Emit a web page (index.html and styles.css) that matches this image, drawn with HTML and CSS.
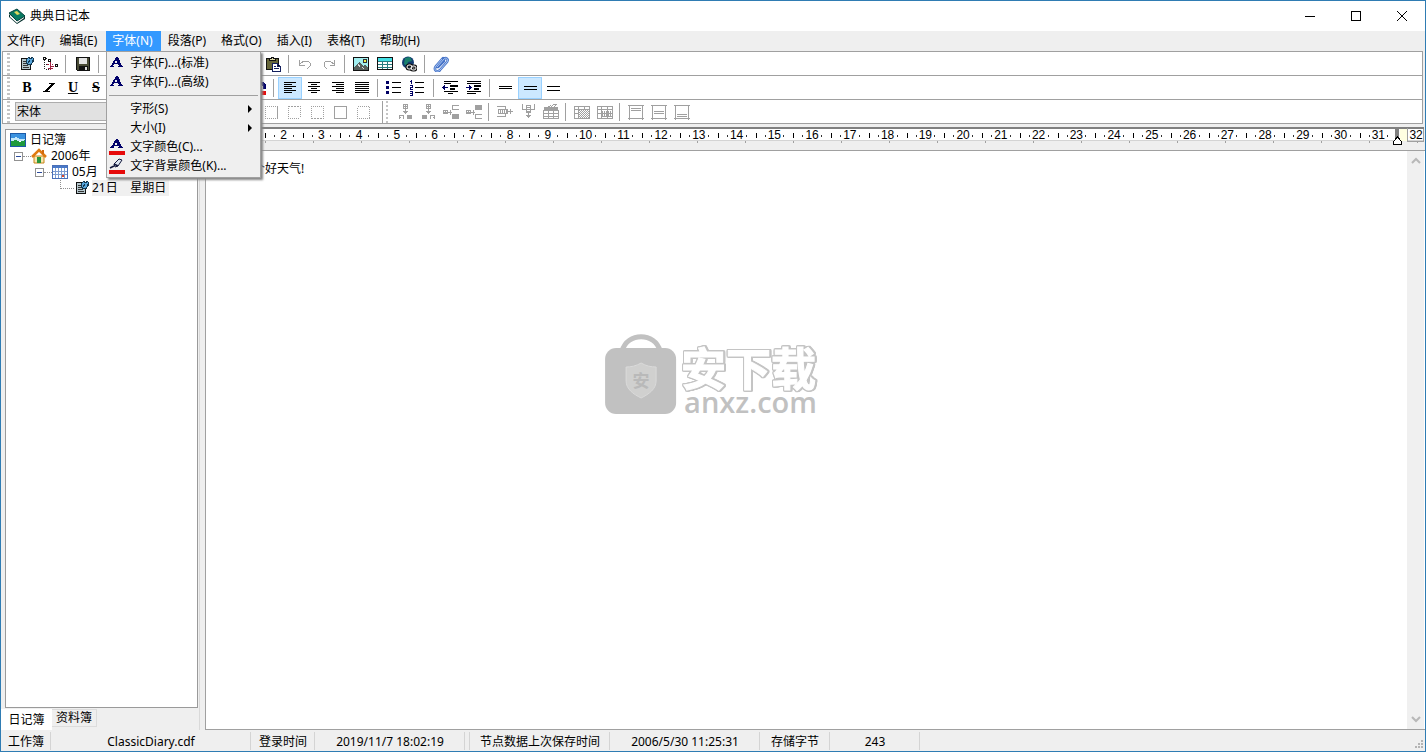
FILE: index.html
```html
<!DOCTYPE html>
<html lang="zh-CN">
<head>
<meta charset="utf-8">
<title>典典日记本</title>
<link rel="stylesheet" href="styles.css">
</head>
<body>
<svg class="defs" aria-hidden="true">
  <symbol id="letter-a" viewBox="0 0 16 16"><path fill="#00006a" d="M7 2h2l4 9h1v1H9v-1h1L9 9H5l-1 2h1v1H1v-1h1zM7 5L5.500 8h3z"/></symbol>
  <symbol id="diary" viewBox="0 0 16 16"><path fill="#b4c6cc" stroke="#111" d="M2.500 2.500h9v11h-9z"/><path stroke="#333" d="M4 5.500h3M4 7.500h3M4 9.500h5M4 11.500h6"/><path fill="#58a6dc" stroke="#143850" d="M7.500 6.500v-3l2-2 2 1 2-1 1 1v3l-2 2v1h-4z"/><path stroke="#143850" d="M11 4L8 9M13 4v2"/></symbol>
  <symbol id="expander" viewBox="0 0 9 9"><path fill="#fff" stroke="#919191" d="M.5.5h8v8h-8z"/><path stroke="#2b4a9b" d="M2 4.500h5"/></symbol>
</svg>

<div class="window">
  <header class="titlebar">
    <svg class="app-icon" viewBox="0 0 18 18"><path fill="#042f2b" d="M1 7l8 8 8-6v3l-8 5-8-7z"/><path fill="#fff" d="M2 8l7 6 7-5v2l-7 5-7-6z"/><path fill="#087a62" stroke="#04423c" d="M1 6l8-4 8 7-8 5z"/><path fill="#dfd85c" d="M6 5l3-1 3 3-3 1z"/></svg>
    <h1 class="title">典典日记本</h1>
    <button class="win-btn" aria-label="最小化"><svg viewBox="0 0 12 12"><path d="M1 6.500h10"/></svg></button>
    <button class="win-btn" aria-label="最大化"><svg viewBox="0 0 12 12"><path d="M1.500 1.500h9v9h-9z"/></svg></button>
    <button class="win-btn smooth" aria-label="关闭"><svg viewBox="0 0 12 12"><path d="M1 1l10 10M11 1L1 11"/></svg></button>
  </header>

  <nav class="menubar">
    <button class="menu">文件(F)</button>
    <button class="menu">编辑(E)</button>
    <div class="menu-holder">
      <button class="menu open" aria-expanded="true">字体(N)</button>
      <div class="popup" role="menu">
        <button class="item" role="menuitem"><svg class="ic"><use href="#letter-a"/></svg><span>字体(F)...(标准)</span></button>
        <button class="item" role="menuitem"><svg class="ic"><use href="#letter-a"/></svg><span>字体(F)...(高级)</span></button>
        <hr class="popup-line">
        <button class="item" role="menuitem"><span class="ic"></span><span>字形(S)</span><i class="arrow"></i></button>
        <button class="item" role="menuitem"><span class="ic"></span><span>大小(I)</span><i class="arrow"></i></button>
        <button class="item" role="menuitem"><svg class="ic" viewBox="0 0 16 16"><path fill="#00006a" d="M7 0h2l4 8h1v1H9V8h1L9 7H5L4 8h1v1H1V8h1zM7 3L5.500 6h3z"/><path fill="#e60a0a" d="M0 12h16v4H0z"/></svg><span>文字颜色(C)...</span></button>
        <button class="item" role="menuitem"><svg class="ic smooth" viewBox="0 0 16 16"><path fill="#dce4ee" stroke="#12183c" d="M5 6l5-5 3 1-4 6-3 1z"/><path stroke="#12183c" stroke-width="1.500" d="M5 6l4 2M1 10l4-2"/><path fill="#e60a0a" d="M0 12h16v4H0z"/></svg><span>文字背景颜色(K)...</span></button>
      </div>
    </div>
    <button class="menu">段落(P)</button>
    <button class="menu">格式(O)</button>
    <button class="menu">插入(I)</button>
    <button class="menu">表格(T)</button>
    <button class="menu">帮助(H)</button>
  </nav>

  <div class="toolbars">
    <div class="toolbar">
      <div class="lead">
        <i class="grip"></i>
        <button class="tool" aria-label="日记"><svg class="ic"><use href="#diary"/></svg></button>
        <button class="tool" aria-label="节点"><svg class="ic" viewBox="0 0 16 16"><path stroke="#222" d="M2.500 4v10M4 2.500h2M4 8.500h2M4 13.500h3" stroke-dasharray="1 1"/><path fill="#fff" stroke="#111" d="M1.500 1.500h2v2h-2zM6.500 3.500h2v2h-2zM13.500 8.500h2v2h-2z"/><path stroke="#a02040" d="M5 8.500h2M8 6v8M9 10.500h3M6 12.500h5M10 8v1"/></svg></button>
        <i class="sep"></i>
        <button class="tool" aria-label="保存"><svg class="ic" viewBox="0 0 16 16"><path fill="#4a4c36" stroke="#111" d="M1.500 1.500h13v13h-12l-1-1z"/><path fill="#e4e4e4" d="M4 2h8v6H4z"/><path fill="#111" d="M4 10h9v4H4z"/><path fill="#ddd" d="M10 11h2v3h-2z"/></svg></button>
        <i class="sep"></i>
      </div>
      <button class="tool" aria-label="粘贴"><svg class="ic" viewBox="0 0 16 16"><path fill="#66663a" stroke="#111" d="M1.500 2.500h12v11h-12z"/><path fill="#ddd8a8" stroke="#111" d="M4.500 4.500v-2h2v-1h2v1h2v2z"/><path fill="#fff" stroke="#14205e" d="M7.500 7.500h5l3 3v4.500h-8z"/><path stroke="#14205e" d="M9 10.500h2M9 12.500h5M12.500 8v2.500h3"/></svg></button>
      <i class="sep"></i>
      <button class="tool" aria-label="撤消"><svg class="ic line-grey" viewBox="0 0 16 16"><path d="M2.500 4v5h5M3 8l4-3h4l2 2v3l-3 3"/></svg></button>
      <button class="tool" aria-label="重做"><svg class="ic line-grey" viewBox="0 0 16 16"><path d="M13.500 4v5h-5M13 8L9 5H5L3 7v3l3 3"/></svg></button>
      <i class="sep"></i>
      <button class="tool" aria-label="图片"><svg class="ic" viewBox="0 0 16 16"><path fill="#a2eff0" stroke="#111" d="M.5 1.500h15v13H.5z"/><path fill="#56605c" d="M1 14v-3l5-5 4 4 2-1 3 3v2z"/><path fill="#f1f04a" stroke="#333" d="M10.500 3.500h3v3h-3z"/><path stroke="#ddd" d="M5 8l2 3M9 11l2 2"/></svg></button>
      <button class="tool" aria-label="表格"><svg class="ic" viewBox="0 0 16 16"><path fill="#fff" stroke="#111" d="M.5 1.500h15v12H.5z"/><path fill="#42dfe4" d="M1 2h14v3H1z"/><path stroke="#287c80" d="M1 5.500h14M1 8.500h14M1 11.500h14M5.500 5v8M10.500 5v8"/></svg></button>
      <button class="tool" aria-label="超链接"><svg class="ic smooth" viewBox="0 0 16 16"><circle cx="7" cy="6.500" r="6" fill="#133c72"/><path fill="#18806c" d="M4 2l5-1 2 4-4 1-1 4-3-2z"/><g fill="none" stroke="#111" stroke-width="3"><rect x="6" y="9" width="5" height="4" rx="2"/><rect x="10" y="10" width="5" height="4" rx="2"/></g><g fill="none" stroke="#fff"><rect x="6" y="9" width="5" height="4" rx="2"/><rect x="10" y="10" width="5" height="4" rx="2"/></g></svg></button>
      <i class="sep"></i>
      <button class="tool" aria-label="附件"><svg class="ic smooth" viewBox="0 0 16 16"><path fill="none" stroke="#4774c8" stroke-width="2.500" stroke-linecap="round" d="M4 11l7-8c2-2 5 0 3 3l-7 8c-3 3-7 0-4-4l7-8M5 11l6-6"/><path fill="none" stroke="#a8c4f2" d="M4 11l7-8c2-2 5 0 3 3l-7 8c-3 3-7 0-4-4l6-7"/></svg></button>
    </div>

    <div class="toolbar second">
      <div class="lead">
        <i class="grip"></i>
        <button class="tool letter">B</button>
        <button class="tool" aria-label="斜体"><svg class="ic" viewBox="0 0 16 16"><path fill="#000" d="M7 3h6v1h-1l-6 7h2v1H1v-1h2l6-7H7z"/></svg></button>
        <button class="tool letter under">U</button>
        <button class="tool letter strike">S</button>
      </div>
      <button class="tool" aria-label="颜色"><svg class="ic" viewBox="0 0 16 16"><path fill="#00006a" d="M8 2h5l3 3v4h-3V6z"/><path fill="#e60a0a" d="M0 11h16v4H0z"/></svg></button>
      <i class="sep"></i>
      <button class="tool on" aria-label="左对齐"><svg class="ic line-black" viewBox="0 0 16 16"><path d="M2 2.500h12M2 4.500h8M2 6.500h12M2 8.500h8M2 10.500h12M2 12.500h8"/></svg></button>
      <button class="tool" aria-label="居中"><svg class="ic line-black" viewBox="0 0 16 16"><path d="M2 2.500h12M5 4.500h6M2 6.500h12M5 8.500h6M2 10.500h12M5 12.500h6"/></svg></button>
      <button class="tool" aria-label="右对齐"><svg class="ic line-black" viewBox="0 0 16 16"><path d="M2 2.500h12M6 4.500h8M2 6.500h12M6 8.500h8M2 10.500h12M6 12.500h8"/></svg></button>
      <button class="tool" aria-label="两端对齐"><svg class="ic line-black" viewBox="0 0 16 16"><path d="M1 2.500h14M1 4.500h14M1 6.500h14M1 8.500h14M1 10.500h14M1 12.500h14"/></svg></button>
      <i class="sep"></i>
      <button class="tool" aria-label="项目符号"><svg class="ic line-black" viewBox="0 0 16 16"><path fill="#000064" stroke="none" d="M0 1h3v3H0zM0 6h3v3H0zM0 11h3v3H0z"/><path d="M6 2.500h9M6 7.500h9M6 12.500h9"/></svg></button>
      <button class="tool" aria-label="编号"><svg class="ic line-black" viewBox="0 0 16 16"><path stroke="#000064" d="M1.500 0v4M0 1.500h1M0 5.500h2.500v2h-2v2H3M0 11.500h2.500v4H0M0 13.500h2"/><path d="M5 2.500h9M5 7.500h9M5 12.500h9"/></svg></button>
      <i class="sep"></i>
      <button class="tool" aria-label="减少缩进"><svg class="ic line-black" viewBox="0 0 16 16"><path d="M2 1.500h14M2 3.500h7M2 11.500h14M6 13.500h5"/><path stroke-width="2" d="M8 6h8M8 9h5"/><path stroke="#000064" d="M0 7.500h6M1.500 6v3M2.500 5v5"/></svg></button>
      <button class="tool" aria-label="增加缩进"><svg class="ic line-black" viewBox="0 0 16 16"><path d="M1 1.500h14M1 3.500h14M1 11.500h14M1 13.500h9"/><path stroke-width="2" d="M8 6h7M8 9h5"/><path stroke="#000064" d="M0 7.500h6M4.500 6v3M3.500 5v5"/></svg></button>
      <i class="sep"></i>
      <button class="tool" aria-label="单倍行距"><svg class="ic line-black" viewBox="0 0 16 16"><path d="M1 6.500h13M1 8.500h13"/></svg></button>
      <button class="tool on" aria-label="1.5 倍行距"><svg class="ic line-black" viewBox="0 0 16 16"><path d="M2 6.500h13M2 9.500h13"/></svg></button>
      <button class="tool" aria-label="双倍行距"><svg class="ic line-black" viewBox="0 0 16 16"><path d="M1 6.500h13M1 10.500h13"/></svg></button>
    </div>

    <div class="toolbar third">
      <div class="lead">
        <i class="grip"></i>
        <select class="font-pick" aria-label="字体"><option>宋体</option></select>
      </div>
      <button class="tool" aria-label="右框线"><svg class="ic line-grey" viewBox="0 0 16 16"><path stroke-dasharray="1 1" d="M2 2.500h12M2.500 2v12M2 14.500h12"/><path d="M14.500 2v13"/></svg></button>
      <button class="tool" aria-label="上框线"><svg class="ic line-grey" viewBox="0 0 16 16"><path stroke-dasharray="1 1" d="M2.500 2v12M2 14.500h12M14.500 2v12"/><path stroke-dasharray="2 1" d="M2 2.500h13"/></svg></button>
      <button class="tool" aria-label="无框线"><svg class="ic line-grey" viewBox="0 0 16 16"><path stroke-dasharray="1 1" d="M2 2.500h12M2.500 2v12M14.500 2v12"/><path stroke-dasharray="2 1" d="M2 14.500h13"/></svg></button>
      <button class="tool" aria-label="全部框线"><svg class="ic line-grey" viewBox="0 0 16 16"><path d="M2.500 2.500h12v12h-12z"/></svg></button>
      <button class="tool" aria-label="内框线"><svg class="ic line-grey" viewBox="0 0 16 16"><path stroke-dasharray="1 1" d="M2.500 2.500h12v12h-12z"/></svg></button>
      <i class="edge"></i>
      <button class="tool" aria-label="拆分行"><svg class="ic line-grey" viewBox="0 0 16 16"><path d="M6.500.5h4v4h-4zM6 2.500h5M8.500 0v10M6 7.500h5M7 8.500h3"/><path d="M2.500 15v-3.500h4V15M2 13.500h2"/><path fill="#a0a0a0" d="M10 11h5v4h-5z"/></svg></button>
      <button class="tool" aria-label="拆分列"><svg class="ic line-grey" viewBox="0 0 16 16"><path d="M6.500.5h4v4h-4zM6 2.500h5M8.500 0v10M6 7.500h5M7 8.500h3"/><path d="M10.500 15v-3.500h4V15M13 13.500h2"/><path fill="#a0a0a0" d="M2 11h5v4H2z"/></svg></button>
      <button class="tool" aria-label="下方插入"><svg class="ic line-grey" viewBox="0 0 16 16"><path d="M.5 6.500h4v3h-4zM2.500 6v4M0 8.500h9M7.500 6v5M16 1.500H9.500v4H16"/><path fill="#a0a0a0" d="M9 10h7v5H9z"/></svg></button>
      <button class="tool" aria-label="上方插入"><svg class="ic line-grey" viewBox="0 0 16 16"><path d="M.5 6.500h4v3h-4zM2.500 6v4M0 8.500h9M7.500 6v5M16 10.500H9.500v4H16"/><path fill="#a0a0a0" d="M9 1h7v5H9z"/></svg></button>
      <i class="sep"></i>
      <button class="tool" aria-label="删除行"><svg class="ic line-grey" viewBox="0 0 16 16"><path d="M0 2.500h8.500v3M0 12.500h8.500v-3M1 5.500h9v4H1zM10 7.500h6M13.500 5v5"/><path stroke-dasharray="1 1" stroke-width="3" d="M1 7.500h9"/></svg></button>
      <button class="tool" aria-label="删除列"><svg class="ic line-grey" viewBox="0 0 16 16"><path d="M2.500 0v5h4M14.500 0v5h-4M6.500 1.500h4v7h-4zM8.500 9v5M6 11.500h5M7 12.500h3"/><path stroke-width="3" stroke-dasharray="1 1" d="M8.500 1v7"/></svg></button>
      <button class="tool" aria-label="删除表格"><svg class="ic line-grey" viewBox="0 0 16 16"><path d="M.5 6.500h15v8H.5zM0 9.500h16M0 12.500h16M5.500 6v8M10.500 6v8M4 3.500l4-2M8 3l3-3h3l-3 3"/><path fill="#a0a0a0" d="M1 3h14v3H1z"/></svg></button>
      <i class="sep"></i>
      <button class="tool" aria-label="选择单元格"><svg class="ic line-grey" viewBox="0 0 16 16"><path d="M.5 2.500h15v12H.5zM.5 5.500h15M4.500 2v12M0 9.500h5M10.500 2v3"/><path d="M5 6.500h10M5 8.500h10M5 10.500h10M5 12.500h10" stroke-dasharray="1 1"/><path d="M5 7.500h10M5 9.500h10M5 11.500h10M5 13.500h10" stroke-dasharray="1 1" stroke-dashoffset="1"/></svg></button>
      <button class="tool" aria-label="选择表格"><svg class="ic line-grey" viewBox="0 0 16 16"><path d="M.5 2.500h15v12H.5zM.5 5.500h15M4.500 2v12M0 9.500h16M10.500 2v12M5 12.500h10"/><path stroke-width="5" stroke-dasharray="1 1" d="M5 9.500h10"/></svg></button>
      <i class="sep"></i>
      <button class="tool" aria-label="顶端对齐"><svg class="ic line-grey" viewBox="0 0 16 16"><path d="M0 1.500h16M0 14.500h16M1.500 1v15M14.500 1v15M3 4.500h10M3 6.500h10"/></svg></button>
      <button class="tool" aria-label="垂直居中"><svg class="ic line-grey" viewBox="0 0 16 16"><path d="M0 1.500h16M0 14.500h16M1.500 1v15M14.500 1v15M3 7.500h10M3 9.500h10"/></svg></button>
      <button class="tool" aria-label="底端对齐"><svg class="ic line-grey" viewBox="0 0 16 16"><path d="M0 1.500h16M0 14.500h16M1.500 1v15M14.500 1v15M3 10.500h10M3 12.500h10"/></svg></button>
    </div>
  </div>

  <main class="workspace">
    <aside class="sidebar">
      <ul class="tree">
        <li class="node"><svg class="ic" viewBox="0 0 16 16"><path fill="#fff" stroke="#1b5aa8" d="M.5 1.500h15v13H.5z"/><path fill="#3a92e0" d="M1 2h14v5H1z"/><path fill="#c4e8fa" d="M1 6h3l2-1 4 2h5v2H1z"/><path fill="#1f9a3c" d="M1 9l5-1 4 2 5-2v6H1z"/></svg><span class="label">日记簿</span></li>
        <li class="node level1"><svg class="expander"><use href="#expander"/></svg><i class="dots"></i><svg class="ic smooth" viewBox="0 0 16 16"><path fill="#f8e7b0" stroke="#c88418" d="M3 8h10v7H3z"/><path fill="#28963c" d="M6 9h4v6H6z"/><path fill="none" stroke="#e07a10" stroke-width="2.500" d="M1 9l7-7 7 7"/><path fill="#d06a10" d="M11 2h2v4h-2z"/></svg><span class="label">2006年</span></li>
        <li class="node level2"><svg class="expander"><use href="#expander"/></svg><i class="dots"></i><svg class="ic" viewBox="0 0 16 16"><path fill="#fff" stroke="#4a70b8" d="M.5 1.500h15v13H.5z"/><path fill="#4878c8" d="M1 2h14v2H1z"/><path stroke="#7c9cd0" d="M1 7.500h14M1 10.500h14M3.500 4v10M6.500 4v10M9.500 4v10M12.500 4v10"/><path fill="#e04828" d="M10 11h2v2h-2z"/></svg><span class="label">05月</span></li>
        <li class="node level3"><i class="elbow"></i><svg class="ic"><use href="#diary"/></svg><span class="label picked">21日&nbsp;&nbsp; &nbsp;星期日</span></li>
      </ul>
      <div class="tabs" role="tablist">
        <button class="tab current" role="tab" aria-selected="true">日记簿</button>
        <button class="tab" role="tab" aria-selected="false">资料簿</button>
      </div>
    </aside>

    <section class="document">
      <div class="ruler">
        <div class="scale">
          <span>1</span><span>2</span><span>3</span><span>4</span><span>5</span><span>6</span><span>7</span><span>8</span><span>9</span><span>10</span><span>11</span><span>12</span><span>13</span><span>14</span><span>15</span><span>16</span><span>17</span><span>18</span><span>19</span><span>20</span><span>21</span><span>22</span><span>23</span><span>24</span><span>25</span><span>26</span><span>27</span><span>28</span><span>29</span><span>30</span><span>31</span><span>32</span>
        </div>
        <div class="tab-stops"></div>
        <svg class="margin-mark" viewBox="0 0 32 18"><path fill="#808080" d="M3 1h4v9H3z"/><path fill="#ffffe1" d="M8 1h7v12H8z"/><path fill="none" stroke="#a0a0a0" d="M15.500 0v13.500H31V.5"/><path fill="#fff" stroke="#000" d="M1.500 16.500v-3L5.500 9l4 4.500v3z"/></svg>
      </div>
      <div class="page">
        <textarea class="editor" aria-label="日记内容" spellcheck="false">今天是个好天气!</textarea>
        <div class="scrollbar"><svg viewBox="0 0 10 8"><path d="M1 6l4-4 4 4"/></svg><svg viewBox="0 0 10 8"><path d="M1 2l4 4 4-4"/></svg></div>
      </div>
    </section>
  </main>

  <footer class="status">
    <span class="cell w50">工作簿</span>
    <span class="cell w200">ClassicDiary.cdf</span>
    <span class="cell w64">登录时间</span>
    <span class="cell w150">2019/11/7 18:02:19</span>
    <span class="cell w5"></span>
    <span class="cell w140">节点数据上次保存时间</span>
    <span class="cell w150">2006/5/30 11:25:31</span>
    <span class="cell w70">存储字节</span>
    <span class="cell w90">243</span>
    <svg class="resize" viewBox="0 0 9 9"><path fill="#b4b4b4" d="M7 0h2v2H7zM7 3h2v2H7zM4 3h2v2H4zM7 6h2v2H7zM4 6h2v2H4zM1 6h2v2H1z"/></svg>
  </footer>

  <div class="watermark">
    <svg class="bag" viewBox="0 0 72 80"><path fill="none" stroke="#c1c1c1" stroke-width="5" d="M17 17C22-2 50-2 55 17"/><rect y="14" width="71" height="66" rx="11" fill="#c1c1c1"/><path fill="#d0d0cf" stroke="#dadada" d="M36 29c5 3 10 4 15 4v14c0 8-7 13-15 17-8-4-15-9-15-17V33c5 0 10-1 15-4z"/><text class="bag-text" x="36" y="53" text-anchor="middle">安</text></svg>
    <div class="brand"><span class="brand-name">安下载</span><span class="brand-site">anxz.com</span></div>
  </div>
</div>
</body>
</html>
```

FILE: styles.css
```css
* { box-sizing: border-box; }
body {
  margin: 0;
  font: 12px/16px "Noto Sans", "Noto Sans CJK SC", sans-serif;
  color: #000;
}
button, select, textarea { font: inherit; color: inherit; border: 0; padding: 0; margin: 0; background: none; border-radius: 0; }
svg { shape-rendering: crispEdges; display: block; flex: none; }
.smooth, .smooth svg { shape-rendering: auto; }
.defs { display: none; }
.ic { width: 16px; height: 16px; flex: none; }
.line-black path { fill: none; stroke: #000; }
.line-black path[fill] { fill: #000064; stroke: none; }
.line-black path[stroke="#000064"] { stroke: #000064; }
.line-grey path { fill: none; stroke: #a0a0a0; }
.line-grey path[fill] { fill: #a0a0a0; stroke: none; }

.window {
  position: relative;
  display: flex;
  flex-direction: column;
  height: 100vh;
  background: #efefef;
  border: 1px solid #2f7cb3;
}

.titlebar { display: flex; height: 30px; flex: none; align-items: center; background: #fff; padding-left: 7px; }
.app-icon { width: 18px; height: 18px; shape-rendering: auto; }
.title { margin: 0 auto 0 4px; font-size: 12px; font-weight: 400; }
.win-btn { width: 46px; height: 30px; display: grid; place-items: center; }
.win-btn svg { width: 12px; height: 12px; fill: none; stroke: #000; }

.menubar { display: flex; gap: 1px; height: 20px; flex: none; }
.menu { height: 20px; padding: 0 8px 0 6px; white-space: nowrap; }
.menu-holder { position: relative; }
.menu.open { background: #3399ff; color: #fff; }
.popup {
  position: absolute;
  z-index: 5;
  top: 20px;
  left: 0;
  width: 155px;
  padding: 1px 2px 2px;
  background: #efefef;
  border: 1px solid #a0a0a0;
  box-shadow: 2px 2px 2px #888;
}
.item { display: flex; align-items: center; gap: 5px; width: 100%; height: 19px; white-space: nowrap; text-align: left; }
.popup-line { margin: 4px 0 3px; border: 0; border-top: 1px solid #a0a0a0; }
.arrow { margin: 0 6px 0 auto; border: solid transparent; border-width: 4px 0 4px 4px; border-left-color: #000; }

.toolbars { flex: none; margin: 0 2px 0 1px; border: 1px solid #a0a0a0; border-top: 0; background: #fff; }
.toolbar { display: flex; height: 24px; border-top: 1px solid #a0a0a0; align-items: center; }
.lead { display: flex; align-items: center; width: 258px; flex: none; overflow: hidden; }
.second .lead { width: 243px; }
.third .lead { width: 256px; }
.grip { width: 3px; height: 22px; margin: 0 5px 0 4px; flex: none; background: repeating-linear-gradient(#c4c4c4 0 2px, #fff 2px 4px); }
.tool { width: 24px; height: 22px; flex: none; display: grid; place-items: center; }
.lead .tool { margin-right: -1px; }
.lead .sep { margin: 0 1px; }
.third .tool { width: 23px; }
.on { background: #cce8ff; border: 1px solid #99d1ff; }
.sep { width: 8px; height: 18px; flex: none; background: linear-gradient(#a0a0a0, #a0a0a0) 3px 0 / 1px 100% no-repeat; }
.edge { width: 19px; height: 22px; flex: none; background: linear-gradient(#a0a0a0, #a0a0a0) 8px 0 / 1px 100% no-repeat, repeating-linear-gradient(#c4c4c4 0 2px, #fff 2px 4px) 12px 0 / 2px 100% no-repeat; }
.letter { font: bold 14px/20px "Liberation Serif", serif; }
.under { text-decoration: underline; }
.strike { text-decoration: line-through; }
.font-pick { appearance: none; width: 145px; height: 19px; padding: 0 1px; border: 1px solid #adadad; background: #e1e1e1; }

.workspace { display: flex; flex: 1; min-height: 0; }
.sidebar { display: flex; flex-direction: column; width: 199px; flex: none; padding: 5px 1px 0 4px; border-right: 1px solid #d9d9d9; }
.tree { flex: 1; margin: 0; padding: 2px 0 0 4px; list-style: none; background: #fff; border: 1px solid #9a9a9a; }
.node { display: flex; align-items: center; height: 16px; white-space: nowrap; }
.label { margin-left: 4px; }
.level1 { padding-left: 4px; }
.level2 { padding-left: 25px; }
.level3 { padding-left: 50px; }
.level3 .label { margin-left: 2px; }
.picked { background: #f0f0f0; padding-right: 3px; }
.expander { width: 9px; height: 9px; }
.dots { width: 8px; border-top: 1px dotted #909090; }
.elbow { width: 14px; height: 9px; margin-bottom: 8px; border-left: 1px dotted #909090; border-bottom: 1px dotted #909090; }
.tabs { display: flex; align-items: flex-start; height: 22px; margin-left: -4px; }
.tab { width: 45px; height: 18px; margin-top: 1px; border: 1px solid #dcdcdc; border-left: 0; }
.tab.current { width: 51px; height: 21px; background: #fff; border: 0; }

.document { display: flex; flex-direction: column; flex: 1; min-width: 0; margin: 3px 0 0 5px; }
.ruler { position: relative; flex: none; margin-right: 1px; }
.scale { display: flex; height: 14px; padding-left: 22px; overflow: hidden; background: #fff; border-top: 2px solid #808080; border-bottom: 1px solid #d4d4d4; }
.scale span {
  width: calc((100% + 11px) / 32);
  flex: none;
  text-align: center;
  font: 12px/13px "Liberation Sans", "Noto Sans CJK SC", sans-serif;
  background:
    linear-gradient(#000, #000) 0 4px / 1px 5px no-repeat,
    linear-gradient(#333, #333) 25% 6px / 1px 2px no-repeat,
    linear-gradient(#333, #333) 76% 6px / 1px 2px no-repeat;
}
.tab-stops { height: 9px; background: repeating-linear-gradient(90deg, transparent 0 12px, #a0a0a0 12px 13px, transparent 13px 48px) 0 0 / 100% 2px no-repeat; }
.margin-mark { position: absolute; top: 1px; right: 0; width: 32px; height: 18px; }
.page { display: flex; flex: 1; min-height: 0; background: #fff; border: 1px solid #a0a0a0; border-right: 0; }
.editor { flex: 1; min-width: 0; resize: none; outline: 0; overflow: hidden; padding: 10px 11px; line-height: 16px; background: #fff; }
.scrollbar { display: flex; flex-direction: column; justify-content: space-between; align-items: center; width: 17px; margin-right: 1px; padding: 6px 0; background: #f0f0f0; }
.scrollbar svg { width: 10px; height: 8px; fill: none; stroke: #b8b8b8; stroke-width: 2; shape-rendering: auto; }

.status { display: flex; align-items: center; flex: none; height: 21px; }
.cell { height: 18px; line-height: 20px; padding-left: 1px; border-right: 1px solid #d4d4d4; text-align: center; white-space: nowrap; flex: none; }
.w5 { width: 5px; }
.w50 { width: 50px; }
.w64 { width: 64px; }
.w70 { width: 70px; }
.w90 { width: 90px; }
.w140 { width: 140px; }
.w150 { width: 150px; }
.w200 { width: 200px; }
.resize { width: 9px; height: 9px; margin: 8px 2px 0 auto; }

.watermark {
  position: absolute;
  top: 50%;
  left: 50%;
  display: flex;
  gap: 4px;
  padding: 0 4px 4px 0;
  transform: translate(-50%, -50%);
  pointer-events: none;
  color: #c1c1c1;
}
.bag { width: 72px; height: 80px; shape-rendering: auto; }
.bag-text { font: bold 17px "Noto Sans CJK SC", sans-serif; fill: #b9b9b9; }
.brand { display: flex; flex-direction: column; height: 80px; }
.brand-name {
  font: bold 45px/44px "Noto Sans CJK SC", sans-serif;
  margin-top: 11px;
  color: #fff;
  -webkit-text-stroke: 1px #fff;
  filter: drop-shadow(1px 0 #c4c4c4) drop-shadow(-1px 0 #c4c4c4) drop-shadow(0 1px #c4c4c4) drop-shadow(0 -1px #c4c4c4) drop-shadow(1px 0 #c4c4c4);
}
.brand-site { font: 600 29px/20px "Open Sans", sans-serif; margin: 3px 0 0 3px; }
```
